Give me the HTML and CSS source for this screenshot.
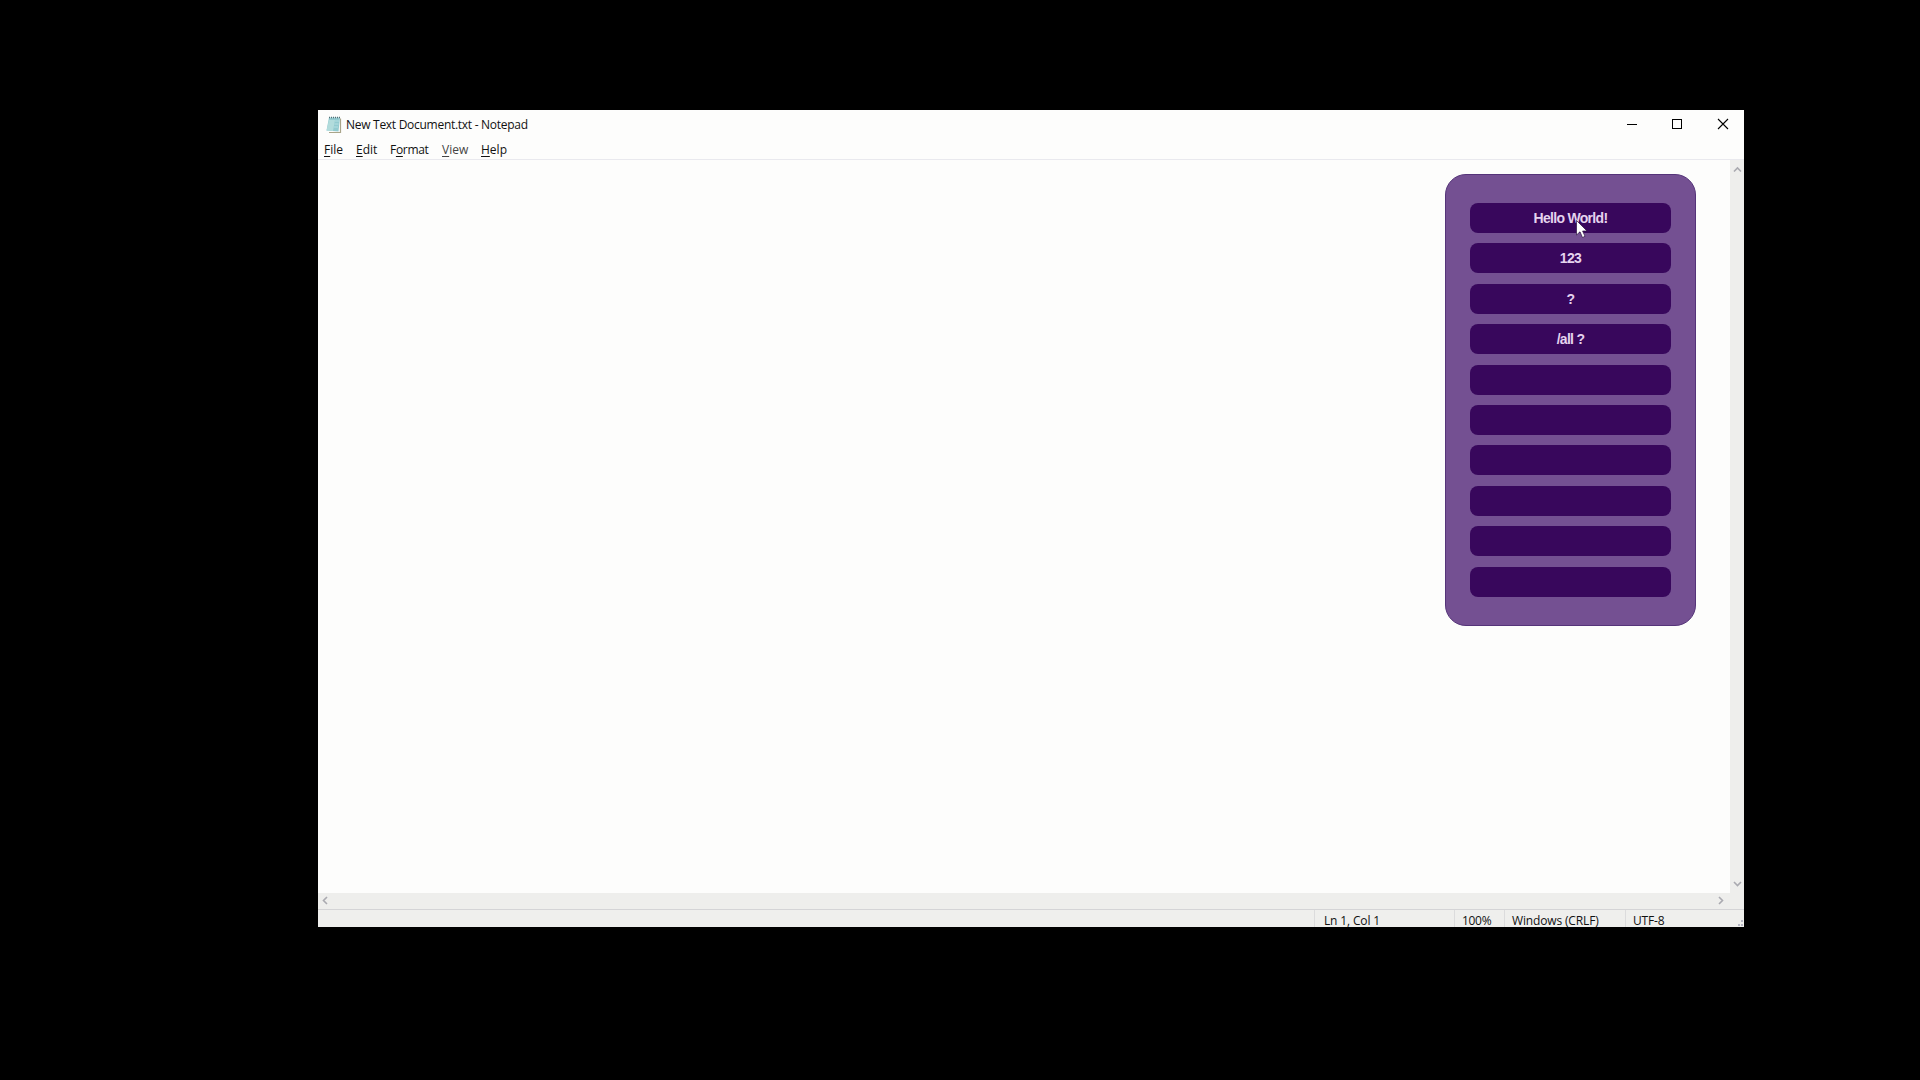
FILE: index.html
```html
<!DOCTYPE html>
<html lang="en">
<head>
<meta charset="utf-8">
<title>New Text Document.txt - Notepad</title>
<link rel="stylesheet" href="styles.css">
</head>
<body>
<main class="window">
  <header class="titlebar">
    <svg class="app-icon" width="16" height="18" viewBox="0 0 16 18">
      <path d="M14.500 2.500V16.500H3" fill="none" stroke="#aaa58a" stroke-width="1.200"/>
      <path d="M3 1.500H14L12.500 15.500L.5 14.500Z" fill="#93cbd0"/>
      <path d="M3 4H9L7 15L.5 14.500Z" fill="#b2dcdc"/>
      <path d="M9 5H13M8.500 8H12.500M8 11H12" stroke="#b5dfe2" stroke-width="1"/>
      <path d="M3 1.500H14" stroke="#527178" stroke-width="1.500" stroke-dasharray="1 1"/>
    </svg>
    <span class="title">New Text Document.txt - Notepad</span>
    <div class="controls">
      <svg width="46" height="28" viewBox="0 0 46 28"><path d="M11 14.500H21" stroke="#000"/></svg>
      <svg width="46" height="28" viewBox="0 0 46 28"><rect x="10.500" y="9.500" width="9" height="9" fill="none" stroke="#000"/></svg>
      <svg width="36" height="28" viewBox="0 0 36 28"><path d="M10 9L20 19M20 9L10 19" stroke="#000" stroke-width="1.100"/></svg>
    </div>
  </header>
  <nav class="menu">
    <span class="m-file"><u>F</u>ile</span>
    <span class="m-edit"><u>E</u>dit</span>
    <span class="m-format">F<u>o</u>rmat</span>
    <span class="m-view"><u>V</u>iew</span>
    <span class="m-help"><u>H</u>elp</span>
  </nav>
  <div class="editor">
    <div class="page"></div>
    <div class="vscroll">
      <svg width="14" height="18" viewBox="0 0 14 18"><path d="M4 11.500L7.500 8L11 11.500" class="arrow"/></svg>
      <svg width="14" height="18" viewBox="0 0 14 18"><path d="M4 7L7.500 10.500L11 7" class="arrow"/></svg>
    </div>
  </div>
  <div class="hscroll">
    <svg width="14" height="16" viewBox="0 0 14 16"><path d="M9 4L5.500 7.500L9 11" class="arrow"/></svg>
    <svg width="14" height="16" viewBox="0 0 14 16"><path d="M5 4L8.500 7.500L5 11" class="arrow"/></svg>
  </div>
  <footer class="status">
    <span class="cell position">Ln 1, Col 1</span>
    <span class="cell percent">100%</span>
    <span class="cell endings">Windows (CRLF)</span>
    <span class="cell encoding">UTF-8</span>
    <svg class="grip" width="8" height="8" viewBox="0 0 8 8"><path d="M5 1h2v2h-2zM2 5h2v2h-2zM5 5h2v2h-2z" fill="#b7b7c4"/></svg>
  </footer>
</main>
<aside class="panel">
  <div class="key">Hello World!</div>
  <div class="key">123</div>
  <div class="key">?</div>
  <div class="key">/all ?</div>
  <div class="key"></div>
  <div class="key"></div>
  <div class="key"></div>
  <div class="key"></div>
  <div class="key"></div>
  <div class="key"></div>
</aside>
<svg class="cursor" width="12" height="19" viewBox="0 0 12 19"><path d="M.5 .5V15L4 11.800L6.500 17.500L9 16.300L6.600 11H11Z" fill="#fff" stroke="#2b1240" stroke-width=".7"/></svg>
</body>
</html>
```
FILE: styles.css
```css
* { box-sizing: border-box; }
body {
  margin: 0;
  height: 1080px;
  overflow: hidden;
  background: #000;
  padding: 110px 0 0 318px;
  font: 12px "Open Sans", "Noto Sans", sans-serif;
  color: #111;
}
.window {
  width: 1426px;
  height: 817px;
  display: flex;
  flex-direction: column;
  background: #fdfdfc;
}
.titlebar { height: 28px; display: flex; align-items: center; padding-left: 8px; }
.app-icon { flex: none; margin-top: 1px; }
.title { margin-left: 4px; white-space: nowrap; letter-spacing: -0.28px; }
.controls { display: flex; margin-left: auto; }
.controls svg { display: block; }
.menu {
  height: 22px;
  display: flex;
  line-height: 24px;
  padding-left: 6px;
  border-bottom: 1px solid #e9e9ee;
}
.menu span { flex: none; white-space: nowrap; }
.menu u { text-underline-offset: 2px; }
.m-file { width: 32px; }
.m-edit { width: 34px; }
.m-format { width: 52px; letter-spacing: -0.3px; }
.m-view { width: 39px; color: #444; }
.editor { height: 733px; display: flex; }
.page { flex: 1; }
.vscroll {
  width: 14px;
  background: #eeeeec;
  display: flex;
  flex-direction: column;
  justify-content: space-between;
}
.arrow { fill: none; stroke: #aaaab0; stroke-width: 1.6; }
.hscroll {
  height: 16px;
  background: #eeeeec;
  display: flex;
  justify-content: space-between;
  padding-right: 16px;
}
.status {
  height: 18px;
  display: flex;
  background: #efefed;
  border-top: 1px solid #d4d4d6;
  padding-left: 996px;
}
.cell {
  flex: none;
  height: 17px;
  border-left: 1px solid #dcdcdd;
  padding: 3px 0 0 9px;
  line-height: 16px;
  white-space: nowrap;
  letter-spacing: -0.15px;
}
.position { width: 140px; }
.percent { width: 50px; padding-left: 7px; letter-spacing: -0.3px; }
.endings { width: 121px; padding-left: 7px; }
.encoding { width: 80px; padding-left: 7px; }
.grip { margin: 9px 0 0 auto; }
.panel {
  position: absolute;
  left: 1445px;
  top: 174px;
  width: 251px;
  height: 452px;
  padding: 28px 24px;
  display: flex;
  flex-direction: column;
  gap: 10.4px;
  border: 1px solid #553479;
  border-radius: 21px;
  background: #745092;
}
.key {
  flex: none;
  height: 30px;
  border-radius: 8px;
  background: #38075c;
  color: #e5d3ee;
  font: bold 14px/30px "Liberation Sans", Arial, sans-serif;
  letter-spacing: -0.7px;
  text-align: center;
}
.cursor { position: absolute; left: 1576px; top: 220px; }
```
